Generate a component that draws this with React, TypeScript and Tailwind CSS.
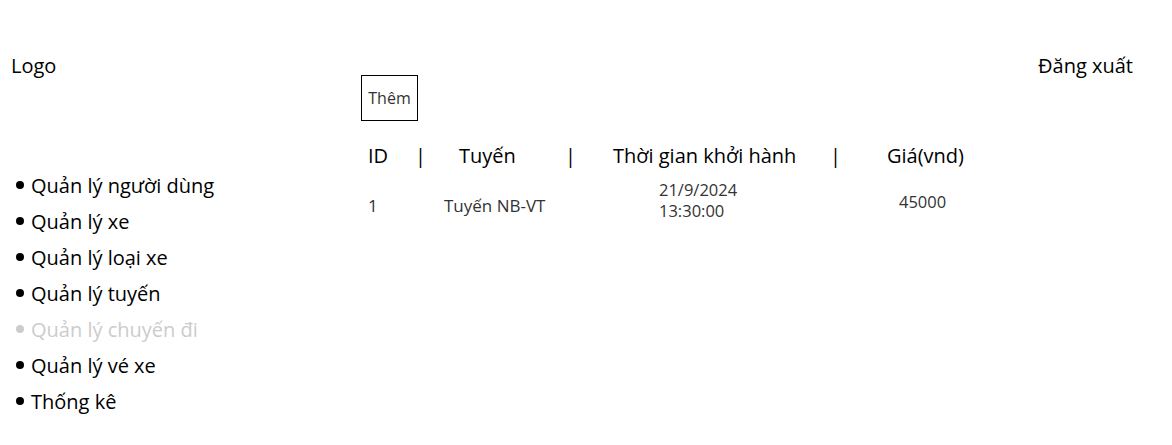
const menu = [
  { label: "Quản lý người dùng" },
  { label: "Quản lý xe" },
  { label: "Quản lý loại xe" },
  { label: "Quản lý tuyến" },
  { label: "Quản lý chuyến đi", active: true },
  { label: "Quản lý vé xe" },
  { label: "Thống kê" },
];

export default function App() {
  return (
    <div className="flex min-h-[445px] bg-white text-black font-['Open_Sans',sans-serif]">
      {/* sidebar */}
      <aside className="w-[361px] shrink-0">
        <div className="pl-[11px] pt-[52px] text-[20px] leading-[28px]">Logo</div>
        <ul className="mt-[88px] pl-[16px]">
          {menu.map((m) => (
            <li
              key={m.label}
              className={`flex items-center h-[36px] text-[20px] ${m.active ? "text-[#cccccc]" : "text-black"}`}
            >
              <span className={`w-[8px] h-[8px] rounded-full mr-[7px] -mt-[2px] ${m.active ? "bg-[#cccccc]" : "bg-black"}`} />
              {m.label}
            </li>
          ))}
        </ul>
      </aside>

      {/* main */}
      <main className="flex-1 pt-[75px]">
        <button className="w-[57px] h-[46px] border border-black text-[16px] text-[#333333] bg-white">
          Thêm
        </button>

        <div className="mt-[21px] pl-[7px] flex items-center h-[28px] text-[20px]">
          <span className="w-[47px]">ID</span>
          <span className="w-[44px]">|</span>
          <span className="w-[106px]">Tuyến</span>
          <span className="w-[48px]">|</span>
          <span className="w-[217px]">Thời gian khởi hành</span>
          <span className="w-[57px]">|</span>
          <span>Giá(vnd)</span>
        </div>

        <div className="mt-[7px] pl-[7px] flex items-start text-[17px] text-[#333333]">
          <span className="w-[76px] mt-[18px] leading-[22px]">1</span>
          <span className="w-[215px] mt-[18px] leading-[22px]">Tuyến NB-VT</span>
          <span className="w-[240px] mt-[2px] leading-[21px] text-[16.5px]">
            21/9/2024
            <br />
            13:30:00
          </span>
          <span className="mt-[14px] leading-[22px] text-[16.5px]">45000</span>
        </div>
      </main>

      <div className="pr-[39px] pt-[52px] text-[20px] leading-[28px]">Đăng xuất</div>
    </div>
  );
}
